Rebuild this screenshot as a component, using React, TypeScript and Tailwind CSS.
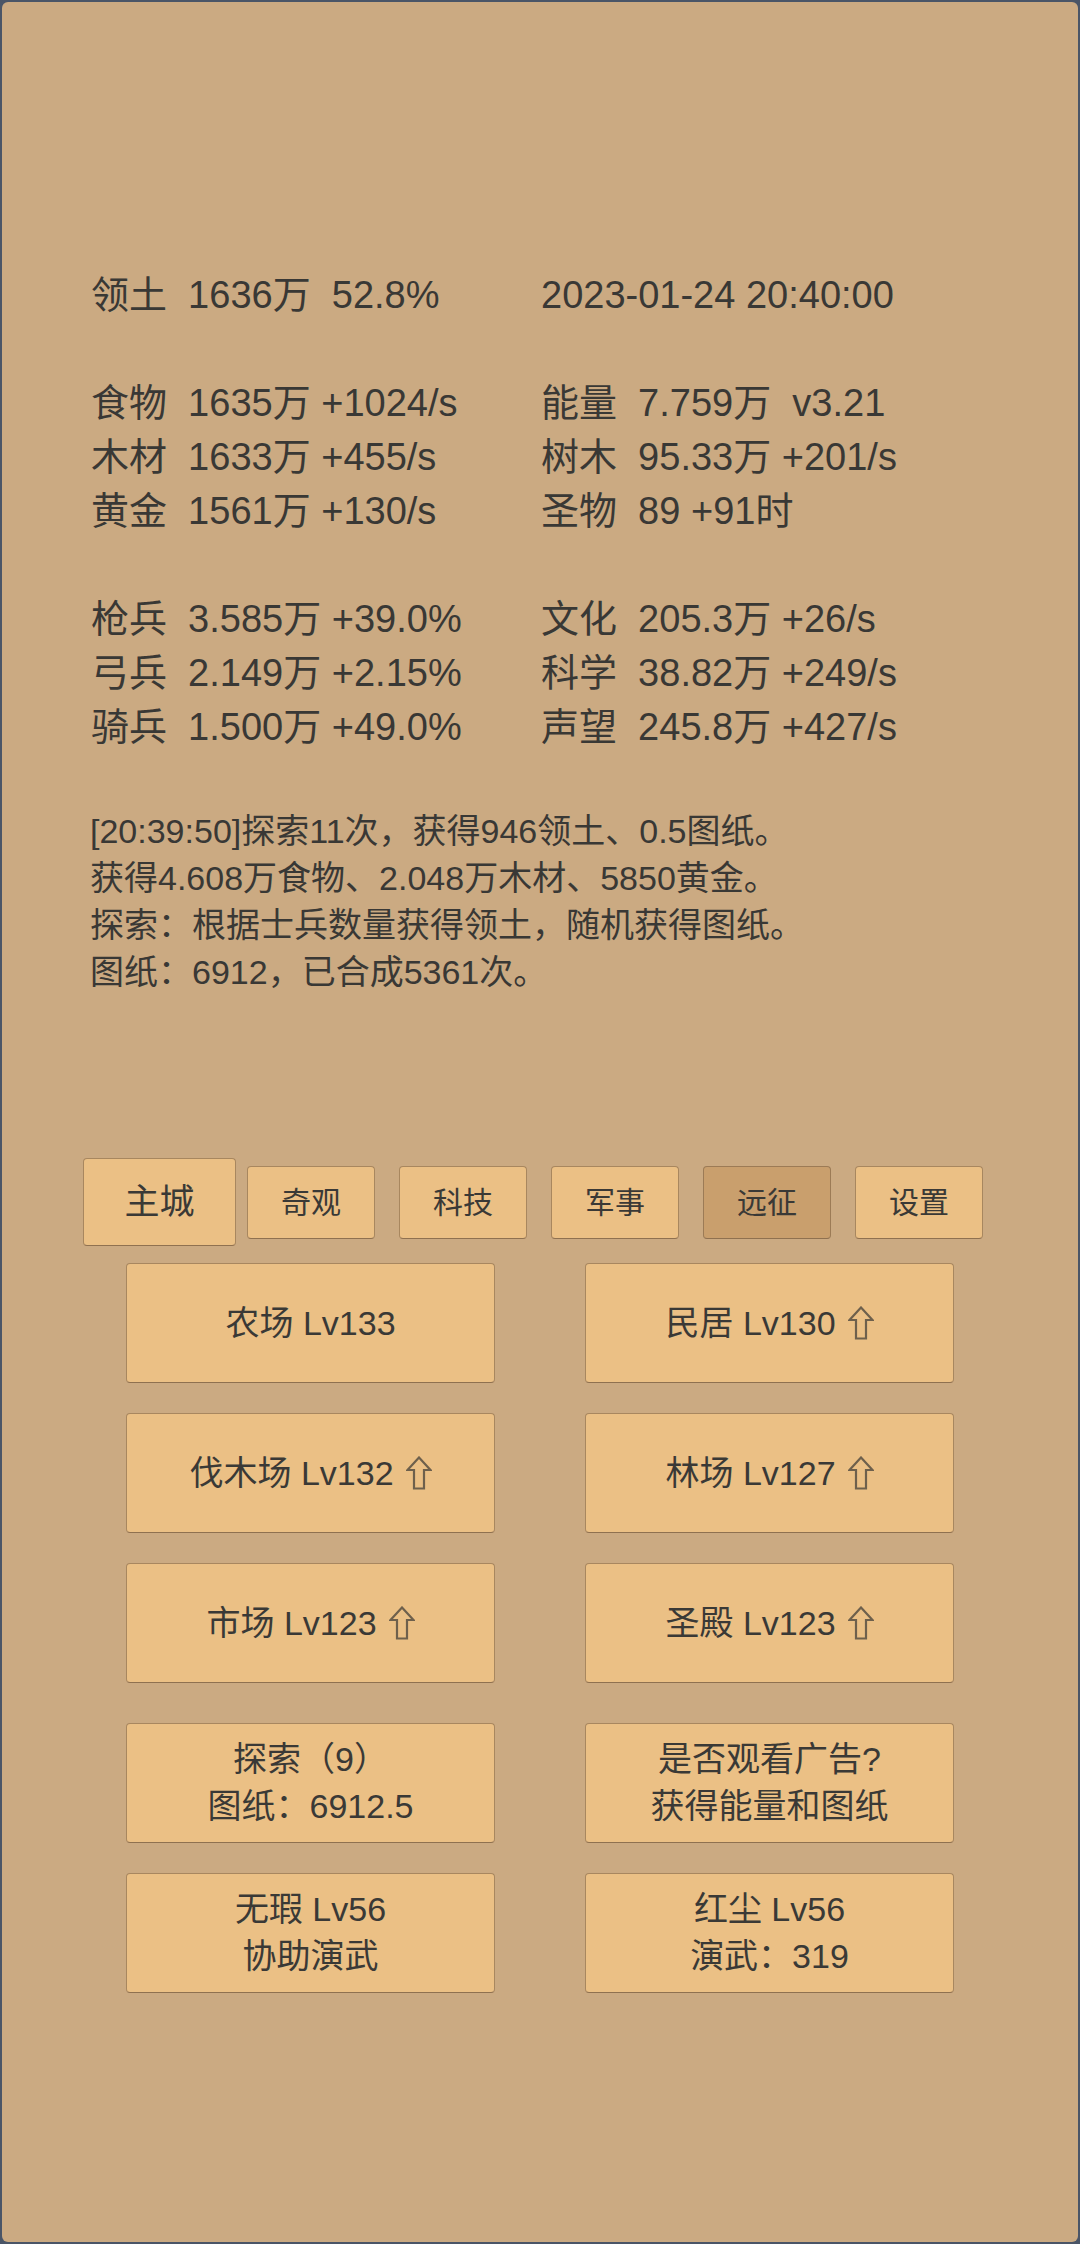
import React from 'react';

const FONT = '"Liberation Sans", "Noto Sans CJK SC", sans-serif';

const stats: [string, string][] = [
    ['领土  1636万  52.8%', '2023-01-24 20:40:00'],
    ['', ''],
    ['食物  1635万 +1024/s', '能量  7.759万  v3.21'],
    ['木材  1633万 +455/s', '树木  95.33万 +201/s'],
    ['黄金  1561万 +130/s', '圣物  89 +91时'],
    ['', ''],
    ['枪兵  3.585万 +39.0%', '文化  205.3万 +26/s'],
    ['弓兵  2.149万 +2.15%', '科学  38.82万 +249/s'],
    ['骑兵  1.500万 +49.0%', '声望  245.8万 +427/s'],
];

const logLines = [
    '[20:39:50]探索11次，获得946领土、0.5图纸。',
    '获得4.608万食物、2.048万木材、5850黄金。',
    '探索：根据士兵数量获得领土，随机获得图纸。',
    '图纸：6912，已合成5361次。',
];

const tabs = ['奇观', '科技', '军事', '远征', '设置'];

const UpArrow: React.FC = () => (
    <svg width="26" height="34" viewBox="0 0 26 34" className="ml-[12px] shrink-0">
        <polygon
            points="13,1.5 24.5,14 18,14 18,32.5 8,32.5 8,14 1.5,14"
            fill="none"
            stroke="#6e604c"
            strokeWidth="2.2"
            strokeLinejoin="miter"
        />
    </svg>
);

interface BtnProps {
    lines: string[];
    up?: boolean;
}

const BigButton: React.FC<BtnProps> = ({ lines, up }) => (
    <div className="h-[120px] w-[369px] rounded-[4px] border border-[#a8875f] border-b-[#8f7150] bg-[#ebc085] flex items-center justify-center text-[34px] text-[#3a3936]">
        {lines.length === 1 ? (
            <div className="flex items-center leading-[47px]">
                <span>{lines[0]}</span>
                {up && <UpArrow />}
            </div>
        ) : (
            <div className="flex flex-col items-center leading-[47px]">
                {lines.map((l) => (
                    <span key={l}>{l}</span>
                ))}
            </div>
        )}
    </div>
);

const buttonRows: BtnProps[][] = [
    [{ lines: ['农场 Lv133'] }, { lines: ['民居 Lv130'], up: true }],
    [{ lines: ['伐木场 Lv132'], up: true }, { lines: ['林场 Lv127'], up: true }],
    [{ lines: ['市场 Lv123'], up: true }, { lines: ['圣殿 Lv123'], up: true }],
];

const bottomRows: BtnProps[][] = [
    [{ lines: ['探索（9）', '图纸：6912.5'] }, { lines: ['是否观看广告?', '获得能量和图纸'] }],
    [{ lines: ['无瑕 Lv56', '协助演武'] }, { lines: ['红尘 Lv56', '演武：319'] }],
];

export default function App() {
    return (
        <div className="w-full min-h-[2244px] bg-[#4a5567] p-[2px]" style={{ fontFamily: FONT }}>
            <div className="min-h-[2240px] rounded-[6px] bg-[#cbaa82] pt-[266px] text-[#393835]">
                {/* 资源 */}
                <div className="pl-[89px] text-[38px] leading-[54px]">
                    {stats.map(([l, r], i) => (
                        <div key={i} className="grid grid-cols-[450px_1fr] h-[54px] whitespace-pre">
                            <span>{l}</span>
                            <span>{r}</span>
                        </div>
                    ))}
                </div>

                {/* 日志 */}
                <div className="mt-[54px] pl-[88px] text-[34px] leading-[47px]">
                    {logLines.map((l) => (
                        <div key={l}>{l}</div>
                    ))}
                </div>

                {/* 标签 */}
                <div className="mt-[162px] pl-[81px] flex items-center h-[88px]">
                    <div className="h-[88px] w-[153px] rounded-[4px] border border-[#a8875f] border-b-[#8f7150] bg-[#ebc085] flex items-center justify-center text-[35px] text-[#3a3936]">
                        主城
                    </div>
                    {tabs.map((t, i) => (
                        <div
                            key={t}
                            className={
                                (i === 0 ? 'ml-[11px] ' : 'ml-[24px] ') +
                                (t === '远征'
                                    ? 'bg-[#c99f6d] border-[#9c7b56] '
                                    : 'bg-[#ebc085] border-[#a8875f] ') +
                                'h-[73px] w-[128px] rounded-[4px] border border-b-[#8f7150] flex items-center justify-center text-[30px] text-[#3a3936]'
                            }
                        >
                            {t}
                        </div>
                    ))}
                </div>

                {/* 建筑 */}
                <div className="mt-[17px] pl-[124px] flex flex-col gap-[30px]">
                    {buttonRows.map((row, i) => (
                        <div key={i} className="flex gap-[90px]">
                            {row.map((b) => (
                                <BigButton key={b.lines[0]} {...b} />
                            ))}
                        </div>
                    ))}
                </div>

                <div className="mt-[40px] pl-[124px] flex flex-col gap-[30px]">
                    {bottomRows.map((row, i) => (
                        <div key={i} className="flex gap-[90px]">
                            {row.map((b) => (
                                <BigButton key={b.lines[0]} {...b} />
                            ))}
                        </div>
                    ))}
                </div>
            </div>
        </div>
    );
}
